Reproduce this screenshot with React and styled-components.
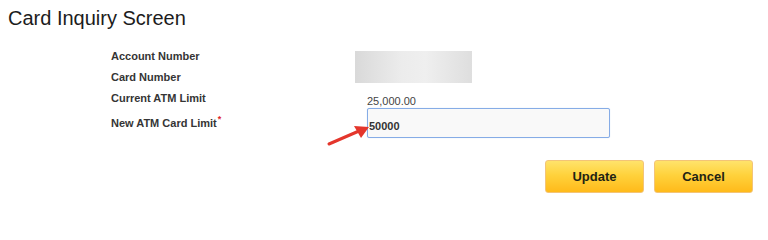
import React from 'react'
import styled, { createGlobalStyle } from 'styled-components'

const GlobalStyle = createGlobalStyle`
  html, body {
    margin: 0;
    padding: 0;
    background: #fff;
    font-family: "Liberation Sans", Arial, sans-serif;
  }
`

const Page = styled.div`
  width: 768px;
  height: 222px;
  overflow: hidden;
  display: flex;
  flex-direction: column;
`

const Title = styled.h1`
  margin: 8px 0 0 8px;
  font-size: 20px;
  line-height: 20px;
  font-weight: normal;
  color: #1c1c1c;
`

const Form = styled.div`
  display: grid;
  grid-template-columns: 256px 243px;
  grid-template-rows: 20px 22px 20px 30px;
  margin: 18px 0 0 111px;
`

const Label = styled.div`
  align-self: center;
  font-size: 11px;
  font-weight: bold;
  color: #353535;
  white-space: nowrap;
`

const Required = styled.sup`
  color: #e0262a;
  font-size: 9px;
  line-height: 0;
  margin-left: 1px;
`

const Masked = styled.div`
  grid-row: span 2;
  align-self: start;
  margin: 5px 0 0 -12px;
  width: 117px;
  height: 32px;
  background: linear-gradient(90deg, #d9d9d9 0%, #ececec 40%, #efefef 60%, #dedede 100%);
`

const Value = styled.div`
  align-self: end;
  font-size: 11px;
  line-height: 14px;
  color: #444;
`

const InputCell = styled.div`
  position: relative;
  display: flex;
`

const LimitInput = styled.input`
  box-sizing: border-box;
  width: 243px;
  height: 30px;
  margin: 0;
  padding: 6px 1px 0;
  border: 1px solid #86ace6;
  border-radius: 2px;
  background: #f9f9f9;
  box-shadow: 0 0 1px #b9d0f3;
  font-family: inherit;
  font-size: 11px;
  font-weight: bold;
  color: #333;
  outline: none;
`

const Arrow = styled.svg`
  position: absolute;
  left: -38px;
  top: 18px;
  overflow: visible;
`

const Actions = styled.div`
  display: flex;
  justify-content: flex-end;
  gap: 10px;
  margin: 22px 15px 0 0;
`

const Button = styled.button`
  width: ${p => p.$width}px;
  height: 33px;
  border: 1px solid #f3c477;
  border-radius: 3px;
  background: linear-gradient(180deg, #ffe36b 0%, #ffd23c 45%, #ffba1a 100%);
  font-family: inherit;
  font-size: 13px;
  font-weight: bold;
  color: #1f2414;
  cursor: pointer;
`

export default function App() {
  return (
    <Page>
      <GlobalStyle />
      <Title>Card Inquiry Screen</Title>
      <Form>
        <Label>Account Number</Label>
        <Masked />
        <Label>Card Number</Label>
        <Label>Current ATM Limit</Label>
        <Value>25,000.00</Value>
        <Label>New ATM Card Limit<Required>*</Required></Label>
        <InputCell>
          <LimitInput defaultValue="50000" />
          <Arrow width="40" height="18" viewBox="0 0 40 18">
            <line x1="0" y1="18" x2="30" y2="5" stroke="#e4362c" strokeWidth="3" strokeLinecap="round" />
            <polygon points="40,1 25,0 32,12" fill="#e4362c" />
          </Arrow>
        </InputCell>
      </Form>
      <Actions>
        <Button $width={99}>Update</Button>
        <Button $width={99}>Cancel</Button>
      </Actions>
    </Page>
  )
}
